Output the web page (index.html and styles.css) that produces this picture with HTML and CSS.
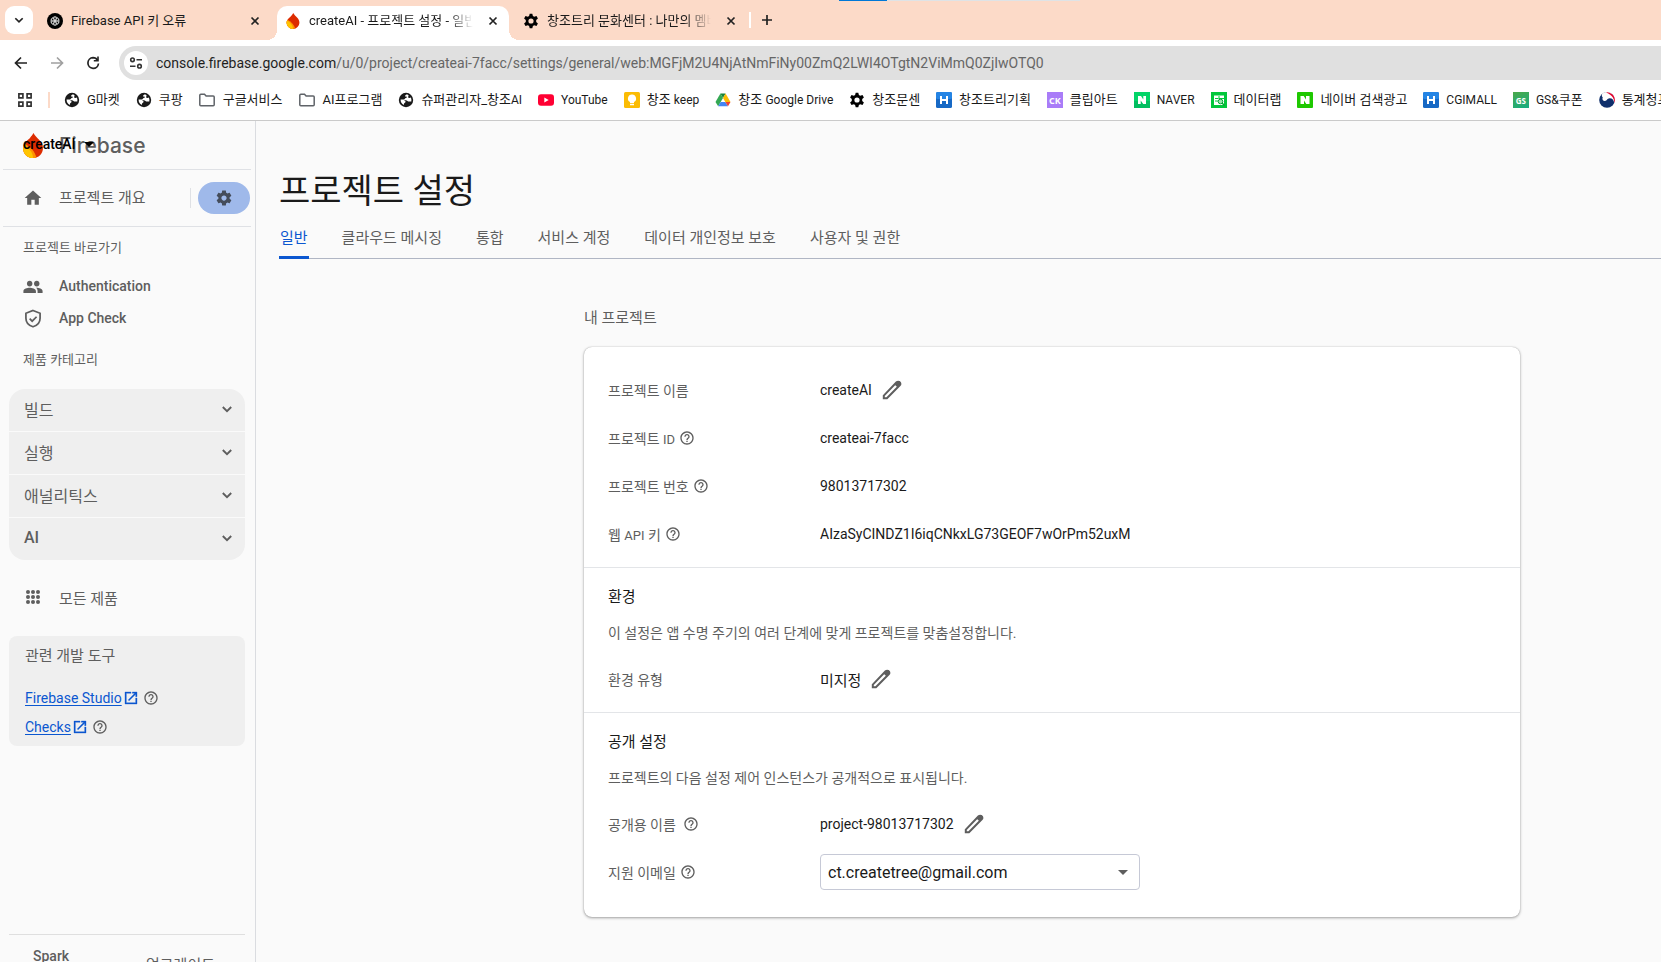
FILE: index.html
```html
<!DOCTYPE html>
<html lang="ko">
<head>
<meta charset="utf-8">
<title>createAI - 프로젝트 설정 - 일반</title>
<link rel="stylesheet" href="styles.css">
</head>
<body>
<svg class="defs" aria-hidden="true">
  <symbol id="close" viewBox="0 0 16 16"><path d="M4.5 4.5l7 7M11.5 4.5l-7 7" stroke="currentColor" stroke-width="1.7" fill="none"/></symbol>
  <symbol id="chevron" viewBox="0 0 16 16"><path d="M3.8 6l4.2 4.2L12.2 6" stroke="currentColor" stroke-width="1.9" fill="none"/></symbol>
  <symbol id="globe" viewBox="0 0 16 16"><circle cx="8" cy="8" r="7.2" fill="currentColor"/><path d="M9.500 2.600C8.500 2.400 7 3 7.200 3.900c.2.800 1.600.4 1.700 1.200 0 .8-1 .9-1.600 1.100-.6.3-.4 1.200-1.400 1.300H2.600c-.2 2.500 1.200 4.600 3.200 5.400l.3-1.300c.3-.9 1.500-.8 1.500-1.800 0-.8-.9-.9-1.600-1.200 1.500-.6 2.800-.5 3.500.3.600.7 1.500.5 2.300.5h1.500c.3-1.300.1-2.700-.5-3.800-1 .5-2.100.5-2.500-.2-.4-.8.5-1.300.2-2.100z" fill="#fff"/></symbol>
  <symbol id="folder" viewBox="0 0 16 16"><path d="M.8 12.700V3.300c0-.6.4-1 1-1h3.700l1.600 1.800h7.100c.6 0 1 .4 1 1v7.600c0 .6-.4 1-1 1H1.800c-.6 0-1-.4-1-1z" fill="none" stroke="#5f6368" stroke-width="1.500"/></symbol>
  <symbol id="gear" viewBox="0 0 24 24"><path d="M19.430 12.980c.040-.320.070-.640.070-.980s-.030-.660-.070-.980l2.110-1.650c.190-.150.240-.420.120-.640l-2-3.460c-.120-.220-.390-.300-.610-.220l-2.490 1c-.520-.400-1.080-.730-1.690-.980l-.380-2.650C14.460 2.180 14.250 2 14 2h-4c-.250 0-.460.180-.490.420l-.380 2.650c-.610.250-1.170.590-1.690.980l-2.490-1c-.230-.090-.490 0-.610.220l-2 3.460c-.130.220-.070.490.120.640l2.110 1.650c-.040.320-.070.650-.070.980s.030.660.070.980l-2.110 1.650c-.190.150-.240.420-.120.640l2 3.460c.120.220.390.300.610.220l2.490-1c.520.400 1.080.730 1.690.980l.380 2.650c.030.240.240.420.490.420h4c.250 0 .460-.180.490-.420l.380-2.650c.610-.250 1.170-.590 1.690-.980l2.490 1c.230.090.490 0 .610-.220l2-3.460c.120-.220.070-.490-.120-.640l-2.110-1.650zM12 15.500c-1.930 0-3.500-1.570-3.500-3.500s1.570-3.500 3.500-3.500 3.500 1.570 3.500 3.500-1.570 3.500-3.500 3.500z" fill="currentColor"/></symbol>
  <symbol id="cog6" viewBox="0 0 16 16"><path fill-rule="evenodd" d="M6.700.8h2.600l.6 2.300 1.300.7 2.300-.7 1.400 2.300-1.700 1.700v1.800l1.700 1.700-1.400 2.300-2.300-.7-1.300.7-.6 2.300H6.700l-.6-2.300-1.300-.7-2.300.7-1.400-2.300 1.700-1.700V7.100L1.100 5.400l1.400-2.300 2.300.7 1.300-.7zM8 5.400a2.600 2.600 0 100 5.200 2.600 2.600 0 000-5.200z" fill="#000"/></symbol>
  <symbol id="flame" viewBox="0 0 20 25"><path d="M10.400 0C9.700 1.800 8.300 3 7.100 4.700 6.200 6 4.500 7 3 8.500 1 10.500 0 12.500 0 14.900 0 20.500 4.500 25 10 25s10-4.500 10-10.100C20 8.300 13.500 5.500 10.400 0z" fill="#dd2c00"/><path d="M1.400 10.500C.5 12 0 13.300 0 14.900 0 20.500 4.500 25 10 25c1.200 0 2.300-.2 3.400-.6C12 19 8 14 1.400 10.500z" fill="#ff9100"/><path d="M.8 11.800C.3 12.800 0 13.900 0 14.900 0 20.500 4.500 25 10 25c0-5-3.500-9.500-9.200-13.200z" fill="#ffc400"/></symbol>
  <symbol id="help" viewBox="0 0 24 24"><path d="M11 18h2v-2h-2v2zm1-16C6.480 2 2 6.480 2 12s4.480 10 10 10 10-4.480 10-10S17.520 2 12 2zm0 18c-4.410 0-8-3.590-8-8s3.590-8 8-8 8 3.590 8 8-3.590 8-8 8zm0-14c-2.210 0-4 1.790-4 4h2c0-1.100.900-2 2-2s2 .900 2 2c0 2-3 1.750-3 5h2c0-2.250 3-2.500 3-5 0-2.210-1.790-4-4-4z" fill="currentColor"/></symbol>
  <symbol id="edit" viewBox="0 0 24 24"><path d="M3.800 17.600L16.600 4.300c.9-.9 2.300-.9 3.100 0s.8 2.100 0 3L6.900 20.200H3.800z" fill="none" stroke="currentColor" stroke-width="2"/><path d="M14.500 6.500l2.800-2.900c1-.9 2-.7 2.900.1s1 2 .1 2.900l-2.700 2.900z" fill="currentColor"/></symbol>
  <symbol id="ext" viewBox="0 0 24 24"><path d="M19 19H5V5h7V3H3v18h18v-9h-2v7zM14 3v2h3.590l-9.830 9.830 1.410 1.410L19 6.410V10h2V3h-7z" fill="currentColor" stroke="currentColor" stroke-width=".5"/></symbol>
  <symbol id="hmark" viewBox="0 0 16 16"><rect width="16" height="16" rx="1.500" fill="#1769c5"/><rect width="16" height="7" rx="1.500" fill="#2484e4"/><path d="M5 4v8M11 4v8M5 8h6" stroke="#fff" stroke-width="2"/></symbol>
</svg>

<header class="browser">
  <div class="tabstrip">
    <i class="progress"><i></i></i>
    <button class="tabsearch" aria-label="탭 검색"><svg><use href="#chevron"/></svg></button>
    <div class="tab tab-first">
      <svg viewBox="0 0 16 16"><circle cx="8" cy="8" r="8" fill="#000"/><g fill="none" stroke="#ddd" stroke-width=".7"><ellipse cx="8" cy="5.900" rx="2.900" ry="2" transform="rotate(-30 8 8)"/><ellipse cx="8" cy="5.900" rx="2.900" ry="2" transform="rotate(30 8 8)"/><ellipse cx="8" cy="5.900" rx="2.900" ry="2" transform="rotate(90 8 8)"/><ellipse cx="8" cy="5.900" rx="2.900" ry="2" transform="rotate(150 8 8)"/><ellipse cx="8" cy="5.900" rx="2.900" ry="2" transform="rotate(210 8 8)"/><ellipse cx="8" cy="5.900" rx="2.900" ry="2" transform="rotate(270 8 8)"/></g></svg>
      <span>Firebase API 키 오류</span>
      <button aria-label="닫기"><svg><use href="#close"/></svg></button>
    </div>
    <div class="tab active">
      <svg><use href="#flame"/></svg>
      <span class="fade">createAI - 프로젝트 설정 - 일반</span>
      <button aria-label="닫기"><svg><use href="#close"/></svg></button>
    </div>
    <div class="tab">
      <svg><use href="#cog6"/></svg>
      <span class="fade">창조트리 문화센터 : 나만의 멤버</span>
      <button aria-label="닫기"><svg><use href="#close"/></svg></button>
    </div>
    <i class="tabsep"></i>
    <button class="newtab" aria-label="새 탭"><svg viewBox="0 0 16 16"><path d="M8 3v10M3 8h10" stroke="#222" stroke-width="1.700"/></svg></button>
  </div>

  <div class="toolbar">
    <button aria-label="뒤로"><svg viewBox="0 0 16 16"><path d="M14 8H3M8 2.500L2.500 8 8 13.500" fill="none" stroke="#222" stroke-width="1.700"/></svg></button>
    <button aria-label="앞으로"><svg viewBox="0 0 16 16"><path d="M2 8h11M8 2.500L13.500 8 8 13.500" fill="none" stroke="#a0a0a0" stroke-width="1.700"/></svg></button>
    <button aria-label="새로고침"><svg viewBox="0 0 16 16"><path d="M13.500 8.500A5.300 5.300 0 118 2.700c2 0 3.600 1 4.700 2.800" fill="none" stroke="#222" stroke-width="1.700"/><path d="M13.800 1.500v5H8.800V5h3.400V1.500z" fill="#222"/></svg></button>
    <div class="address">
      <button class="siteinfo" aria-label="사이트 정보"><svg viewBox="0 0 16 16"><g fill="none" stroke="#333" stroke-width="1.600"><circle cx="4.500" cy="4.800" r="1.800"/><path d="M8.500 4.800h5.500M2 11.200h5.500"/><circle cx="11.500" cy="11.200" r="1.800"/></g></svg></button>
      <span class="url"><b>console.firebase.google.com</b>/u/0/project/createai-7facc/settings/general/web:MGFjM2U4NjAtNmFiNy00ZmQ2LWI4OTgtN2ViMmQ0ZjIwOTQ0</span>
    </div>
  </div>

  <nav class="bookmarks" aria-label="북마크">
    <button class="apps" aria-label="앱"><svg viewBox="0 0 16 16"><g fill="none" stroke="#333" stroke-width="1.700"><path d="M1.900 1.900h4v4h-4zM10.100 1.900h4v4h-4zM1.900 10.100h4v4h-4zM10.100 10.100h4v4h-4z"/></g></svg></button>
    <i class="bmsep"></i>
    <a href="#"><svg><use href="#globe"/></svg><span>G마켓</span></a>
    <a href="#"><svg><use href="#globe"/></svg><span>쿠팡</span></a>
    <a class="dir" href="#"><svg><use href="#folder"/></svg><span>구글서비스</span></a>
    <a class="dir" href="#"><svg><use href="#folder"/></svg><span>AI프로그램</span></a>
    <a href="#"><svg><use href="#globe"/></svg><span>슈퍼관리자_창조<small>AI</small></span></a>
    <a href="#"><svg viewBox="0 0 16 16"><rect y="2.200" width="16" height="11.600" rx="3" fill="#ff0033"/><path d="M6.300 5.500v5L10.700 8z" fill="#fff"/></svg><small>YouTube</small></a>
    <a href="#"><svg viewBox="0 0 16 16"><rect width="16" height="16" rx="1.500" fill="#fbbc04"/><path d="M8 2.500a4 4 0 00-2 7.500v1h4v-1a4 4 0 00-2-7.500zM6 11.800h4v1.400H6z" fill="#fff"/></svg><span>창조 <small>keep</small></span></a>
    <a href="#"><svg viewBox="0 0 16 16"><path d="M5.400 1.500h5.200L8 6z" fill="#188038"/><path d="M10.600 1.500L15.500 10h-5.200L8 6z" fill="#fbbc04"/><path d="M5.400 1.500L8 6 3.200 14.200.5 10z" fill="#34a853"/><path d="M5.700 10h4.600L13 14.200H3.200z" fill="#4285f4"/><path d="M10.300 10h5.200L13 14.200z" fill="#ea4335"/></svg><span>창조 <small>Google Drive</small></span></a>
    <a href="#"><svg><use href="#cog6"/></svg><span>창조문센</span></a>
    <a href="#"><svg><use href="#hmark"/></svg><span>창조트리기획</span></a>
    <a href="#"><i class="mark ck">CK</i><span>클립아트</span></a>
    <a href="#"><svg viewBox="0 0 16 16"><rect width="16" height="16" fill="#03d468"/><rect y="9" width="16" height="7" fill="#02be60"/><path d="M4 12V4h3l2.300 3.600V4H12v8H9.200L6.700 8.400V12z" fill="#fff"/></svg><small>NAVER</small></a>
    <a href="#"><svg viewBox="0 0 16 16"><rect width="16" height="16" fill="#03c73c"/><path d="M3 3.500h10V13H3z" fill="#fff"/><path d="M4 6.500h3.500M4 9h3M8 4v2.500h5" stroke="#03c73c" fill="none"/><circle cx="9.500" cy="9.500" r="2.300" fill="#9be6ae" stroke="#03a833"/><path d="M11 11l2.500 2.500" stroke="#03a833" stroke-width="1.400"/></svg><span>데이터랩</span></a>
    <a href="#"><svg viewBox="0 0 16 16"><rect width="16" height="16" rx="1" fill="#1ec800"/><path d="M3.500 12V4h3.200L9 7.400V4h3.500v8H9.300L7 8.600V12z" fill="#fff"/></svg><span>네이버 검색광고</span></a>
    <a href="#"><svg><use href="#hmark"/></svg><small>CGIMALL</small></a>
    <a href="#"><i class="mark gs">GS</i><span><small>GS&amp;</small>쿠폰</span></a>
    <a href="#"><svg viewBox="0 0 16 16"><circle cx="8" cy="8" r="7.800" fill="#0f2f6b"/><path d="M3.500 1.600A7.800 7.800 0 0115.200 11c-.3-3-2-4.800-4.600-4.700C8 6.400 8.300 9 5.700 8.900 3.500 8.800 3 6.800 3.800 5.500 2.500 4.500 2.500 2.800 3.500 1.600z" fill="#fff"/><path d="M3.500 1.600A7.800 7.800 0 008 15.800" fill="none"/><path d="M7 .4A7.800 7.800 0 0115.300 11c.1-3.500-1.300-8-8.300-10.600z" fill="#e4002b"/></svg><span>통계청포</span></a>
  </nav>
</header>

<div class="app">
  <aside class="sidebar">
    <div class="brand">
      <svg><use href="#flame"/></svg><span>Firebase</span>
      <button class="project">createAI<i></i></button>
    </div>
    <div class="overview">
      <a href="#"><svg viewBox="0 0 24 24"><path d="M10 20v-6h4v6h5v-8h3L12 3 2 12h3v8z" fill="currentColor"/></svg>프로젝트 개요</a>
      <button class="settings" aria-label="설정"><svg><use href="#gear"/></svg></button>
    </div>
    <h2 class="label">프로젝트 바로가기</h2>
    <nav class="shortcuts">
      <a href="#"><svg viewBox="0 0 24 24"><path d="M16.500 12.500c1.900 0 3.300-1.500 3.300-3.300s-1.400-3.400-3.300-3.400-3.300 1.500-3.300 3.400 1.500 3.300 3.300 3.300zm-8.500 0c1.900 0 3.300-1.500 3.300-3.300S9.900 5.800 8 5.800 4.700 7.300 4.700 9.200s1.400 3.300 3.300 3.300zm0 1.500c-2.700 0-7.500 1.300-7.500 4v2.500h15V18c0-2.700-4.900-4-7.500-4zm8.500 0c-.3 0-.7 0-1 .1 1.200.9 2 2.200 2 3.900v2.500h6V18c0-2.700-4.400-4-7-4z" fill="currentColor"/></svg>Authentication</a>
      <a href="#"><svg viewBox="0 0 24 24"><path d="M12 3l8.500 3.300v6c0 4.700-3.500 8.700-8.500 10.200-5-1.500-8.500-5.500-8.500-10.200v-6zM8 12.800l3 3 5.300-5.300" fill="none" stroke="currentColor" stroke-width="2.100"/></svg>App Check</a>
    </nav>
    <h2 class="label products">제품 카테고리</h2>
    <div class="categories">
      <button>빌드<svg><use href="#chevron"/></svg></button>
      <button>실행<svg><use href="#chevron"/></svg></button>
      <button>애널리틱스<svg><use href="#chevron"/></svg></button>
      <button>AI<svg><use href="#chevron"/></svg></button>
    </div>
    <a class="all" href="#"><svg viewBox="0 0 18 18"><g fill="currentColor"><circle cx="4" cy="4" r="2"/><circle cx="9" cy="4" r="2"/><circle cx="14" cy="4" r="2"/><circle cx="4" cy="9" r="2"/><circle cx="9" cy="9" r="2"/><circle cx="14" cy="9" r="2"/><circle cx="4" cy="14" r="2"/><circle cx="9" cy="14" r="2"/><circle cx="14" cy="14" r="2"/></g></svg>모든 제품</a>
    <section class="tools">
      <h2>관련 개발 도구</h2>
      <p><a href="#">Firebase Studio</a><svg class="out"><use href="#ext"/></svg><svg><use href="#help"/></svg></p>
      <p><a href="#">Checks</a><svg class="out"><use href="#ext"/></svg><svg><use href="#help"/></svg></p>
    </section>
    <footer class="plan"><b>Spark</b><a href="#">업그레이드</a></footer>
  </aside>

  <main>
    <h1>프로젝트 설정</h1>
    <nav class="pagetabs">
      <a class="on" href="#">일반</a><a href="#">클라우드 메시징</a><a href="#">통합</a><a href="#">서비스 계정</a><a href="#">데이터 개인정보 보호</a><a href="#">사용자 및 권한</a>
    </nav>
    <div class="content">
      <h2>내 프로젝트</h2>
      <div class="card">
        <section class="first">
          <dl>
            <div><dt>프로젝트 이름</dt><dd>createAI<button aria-label="이름 수정"><svg><use href="#edit"/></svg></button></dd></div>
            <div><dt><span>프로젝트 <small>ID</small></span><svg><use href="#help"/></svg></dt><dd>createai-7facc</dd></div>
            <div><dt>프로젝트 번호<svg><use href="#help"/></svg></dt><dd>98013717302</dd></div>
            <div><dt><span>웹 <small>API</small> 키</span><svg><use href="#help"/></svg></dt><dd>AIzaSyCINDZ1I6iqCNkxLG73GEOF7wOrPm52uxM</dd></div>
          </dl>
        </section>
        <section>
          <h3>환경</h3>
          <p>이 설정은 앱 수명 주기의 여러 단계에 맞게 프로젝트를 맞춤설정합니다.</p>
          <dl>
            <div><dt>환경 유형</dt><dd class="ko">미지정<button aria-label="환경 수정"><svg><use href="#edit"/></svg></button></dd></div>
          </dl>
        </section>
        <section class="last">
          <h3>공개 설정</h3>
          <p>프로젝트의 다음 설정 제어 인스턴스가 공개적으로 표시됩니다.</p>
          <dl>
            <div><dt class="wide">공개용 이름<svg><use href="#help"/></svg></dt><dd>project-98013717302<button aria-label="공개용 이름 수정"><svg><use href="#edit"/></svg></button></dd></div>
            <div><dt><label for="email">지원 이메일</label><svg><use href="#help"/></svg></dt><dd><span class="select"><select id="email"><option>ct.createtree@gmail.com</option></select></span></dd></div>
          </dl>
        </section>
      </div>
    </div>
  </main>
</div>
</body>
</html>
```
FILE: styles.css
```css
* { box-sizing: border-box; }
body {
  margin: 0;
  height: 100vh;
  display: flex;
  flex-direction: column;
  overflow: hidden;
  background: #fafafa;
  color: #1a1a1a;
  font-family: Roboto, "Noto Sans CJK KR", sans-serif;
  font-size: 14px;
}
.defs { position: absolute; width: 0; height: 0; }
button { border: 0; padding: 0; background: none; font: inherit; color: inherit; display: flex; align-items: center; justify-content: center; }
a { color: inherit; text-decoration: none; }
svg { flex: none; width: 16px; height: 16px; display: block; }
h1, h2, h3, p, dl, dd { margin: 0; font-weight: 400; }
small { font-size: 12px; }

/* Browser frame */
.browser {
  flex: none;
  background: #fff;
  border-bottom: 1px solid #cacaca;
  font-size: 13px;
}
.tabstrip { position: relative; height: 40px; display: flex; align-items: center; background: #fcdac8; padding-left: 5px; }
.progress { position: absolute; top: 0; left: 839px; width: 241px; height: 1px; background: #dfe3e6; }
.progress i { display: block; width: 48px; height: 1px; background: #0078d7; }
.tabsearch { width: 28px; height: 28px; border-radius: 9px; background: #fff; color: #222; }
.tabsearch svg { width: 14px; height: 14px; }
.tab { position: relative; width: 238px; height: 34px; align-self: flex-end; display: flex; align-items: center; gap: 8px; padding: 0 4px 5px 14px; }
.tab span { flex: 1; min-width: 0; white-space: nowrap; overflow: hidden; line-height: 18px; }
.tab button { width: 24px; color: #222; }
.tab .fade { mask-image: linear-gradient(to right, #000 85%, transparent); }
.tab-first { width: 244px; padding-right: 10px; }
.tab.active { width: 232px; padding-left: 8px; background: #fff; border-radius: 10px 10px 0 0; }
.tab.active::before, .tab.active::after { content: ""; position: absolute; bottom: 0; width: 10px; height: 10px; }
.tab.active::before { left: -10px; background: radial-gradient(circle at 0 0, #fcdac8 10px, #fff 10px); }
.tab.active::after { right: -10px; background: radial-gradient(circle at 100% 0, #fcdac8 10px, #fff 10px); }
.tabsep { width: 2px; height: 16px; background: #fff; margin-left: 2px; }
.newtab { margin-left: 8px; }

.toolbar { height: 46px; display: flex; align-items: center; padding: 6px 0; gap: 20px; padding-left: 13px; }
.address { flex: 1; height: 34px; display: flex; align-items: center; gap: 8px; padding-left: 5px; margin-left: -2px; background: #e0e0e0; border-radius: 17px 0 0 17px; }
.siteinfo { width: 24px; height: 24px; border-radius: 50%; background: #fff; }
.url { font-size: 14px; color: #666; white-space: nowrap; }
.url b { font-weight: 400; color: #1f1f1f; }

.bookmarks { height: 34px; display: flex; align-items: center; gap: 16px; padding: 0 0 6px 17px; overflow: hidden; white-space: nowrap; }
.bookmarks > * { flex: none; }
.bookmarks a { display: flex; align-items: center; gap: 7px; line-height: 20px; }
.bookmarks .dir { gap: 8px; }
.bmsep { width: 2px; height: 16px; background: #fcdac8; margin: 0 -2px 0 -1px; }
.mark { width: 16px; height: 16px; display: flex; align-items: center; justify-content: center; color: #fff; font: 700 9px "Open Sans", sans-serif; }
.ck { background: #a97cf8; }
.gs { background: linear-gradient(160deg, #4ba84a, #16ad83); font-size: 8px; }

/* Console */
.app { flex: 1; min-height: 0; display: flex; }
.sidebar { flex: none; width: 256px; border-right: 1px solid #dadce0; color: #5e5e5e; display: flex; flex-direction: column; overflow: hidden; }
.brand { position: relative; height: 49px; margin: 0 4px 0 3px; padding-left: 20px; display: flex; align-items: center; gap: 16px; border-bottom: 1px solid #dfe1e5; }
.brand svg { width: 20px; height: 25px; }
.brand span { font: 500 21px Inter, sans-serif; }
.project { position: absolute; left: 20px; top: 14px; line-height: 18px; font-weight: 500; color: #000; gap: 8px; }
.project i { border: 5px solid transparent; border-top-color: #000; border-bottom: 0; }
.overview { height: 57px; margin: 0 4px 0 3px; padding-left: 20px; display: flex; align-items: center; border-bottom: 1px solid #dfe1e5; }
.overview a { flex: 1; display: flex; align-items: center; gap: 16px; font-size: 15px; line-height: 20px; border-right: 1px solid #dfe1e5; margin-right: 7px; }
.overview svg { width: 20px; height: 20px; }
.settings { width: 52px; height: 32px; margin-right: 1px; border-radius: 16px; background: #9fb9ea; color: #444c5a; }
.settings svg { width: 18px; height: 18px; }
.label { font-size: 13px; line-height: 20px; margin: 11px 0 0 23px; }
.shortcuts { margin: 12px 0 0 23px; }
.shortcuts a { height: 32px; display: flex; align-items: center; gap: 16px; font-weight: 500; }
.shortcuts svg { width: 20px; height: 20px; }
.products { margin-top: 16px; }
.categories { margin: 19px 10px 0 9px; border-radius: 16px; overflow: hidden; background: #efefef; }
.categories button { width: 100%; height: 43px; padding: 0 10px 3px 15px; justify-content: space-between; font-size: 16px; font-weight: 400; border-bottom: 1px solid #fafafa; }
.categories button:last-child { height: 42px; border: 0; font-weight: 500; }
.all { margin: 25px 0 0 23px; height: 24px; display: flex; align-items: center; gap: 16px; font-size: 15px; }
.all svg { width: 20px; height: 20px; padding: 1px; }
.tools { margin: 27px 10px 0 9px; height: 110px; padding: 10px 16px; border-radius: 8px; background: #efefef; }
.tools h2 { font-size: 15px; line-height: 20px; margin-bottom: 17px; }
.tools p { display: flex; align-items: center; height: 29px; }
.tools a { color: #0b57d0; text-decoration: underline; text-underline-offset: 2px; margin-right: 1px; }
.tools .out { color: #0b57d0; margin-right: 4px; }
.plan { flex: none; margin: auto 10px 0 9px; height: 28px; padding: 11px 30px 0 24px; border-top: 1px solid #dfdfdf; display: flex; justify-content: space-between; overflow: hidden; white-space: nowrap; line-height: 20px; }
.plan b { font-weight: 500; }
.plan a { font-size: 15px; padding-top: 9px; }

main { flex: 1; min-width: 0; padding-left: 23px; }
h1 { font-size: 34px; line-height: 48px; margin-top: 46px; }
.pagetabs { display: flex; gap: 32px; height: 44px; border-bottom: 1px solid #b0b6c4; font-size: 15px; color: #5e5e5e; white-space: nowrap; }
.pagetabs a { height: 44px; line-height: 46px; padding: 0 1px; border-bottom: 3px solid transparent; }
.pagetabs .on { color: #0b57d0; border-bottom-color: #0b57d0; }
.content { margin: 47px 141px 0 305px; }
.content h2 { font-size: 15px; line-height: 24px; color: #5e5e5e; }
.card { margin-top: 17px; background: #fff; border-radius: 8px; box-shadow: 0 1px 3px rgba(0,0,0,.35), 0 0 1px rgba(0,0,0,.3); }
.card section { padding: 17px 24px 9px; border-bottom: 1px solid #e3e5e8; }
.card .first { padding-top: 19px; }
.card .last { border: 0; padding-bottom: 21px; }
.card h3 { font-size: 15px; line-height: 24px; }
.card p { line-height: 20px; color: #5e5e5e; font-size: 14px; margin: 14px 0 12px; }
.card dl > div { height: 48px; display: grid; grid-template-columns: 212px 1fr; align-items: center; }
.card dt { display: flex; align-items: center; gap: 4px; color: #5e5e5e; font-size: 14px; }
.card small { font-size: 13px; }
.card dt svg, .tools svg { width: 16px; height: 16px; }
.card dt.wide { gap: 7px; }
.card dd { display: flex; align-items: center; gap: 8px; }
.card dd.ko { font-size: 15px; }
.card dd button { color: #5e5e5e; }
.card dd button svg { width: 24px; height: 24px; }
.select { position: relative; width: 320px; }
.select::after { content: ""; position: absolute; right: 12px; top: 16px; border: 5px solid transparent; border-top-color: #5e5e5e; border-bottom: 0; }
.select select { appearance: none; width: 100%; height: 36px; padding: 0 7px; border: 1px solid #c6c9d6; border-radius: 4px; background: #fff; color: #1a1a1a; font: 16px Roboto, sans-serif; }
```
